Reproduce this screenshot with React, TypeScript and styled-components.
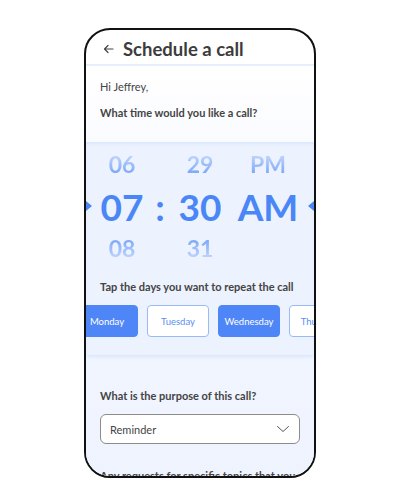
import React from 'react'
import styled, { createGlobalStyle } from 'styled-components'

const GlobalStyle = createGlobalStyle`
  html, body {
    margin: 0;
    padding: 0;
    background: #fff;
  }
  body {
    font-family: Lato, 'Noto Sans', sans-serif;
  }
`

const Stage = styled.div`
  width: 400px;
  height: 503px;
  padding-top: 28px;
  box-sizing: border-box;
  display: flex;
  justify-content: center;
`

const Phone = styled.div`
  width: 232px;
  height: 450px;
  box-sizing: border-box;
  border: 2px solid #111;
  border-radius: 26px;
  overflow: hidden;
  background: #fff;
  display: flex;
  flex-direction: column;
`

const Header = styled.div`
  height: 36px;
  flex-shrink: 0;
  display: flex;
  align-items: center;
  gap: 9px;
  padding: 3px 0 0 17px;
  box-sizing: border-box;
  border-bottom: 2px solid #e7eefc;
`

const Title = styled.h1`
  margin: 0;
  font-size: 18.5px;
  font-weight: 700;
  color: #3c3c3c;
`

const Greeting = styled.div`
  flex-shrink: 0;
  padding: 13px 14px 21px;
  background: linear-gradient(#fff, #fafbff);
`

const Text = styled.p<{ $bold?: boolean; $gap?: number }>`
  margin: ${p => p.$gap ?? 0}px 0 0;
  font-size: 11px;
  line-height: 16px;
  font-weight: ${p => (p.$bold ? 700 : 400)};
  color: #444;
  white-space: nowrap;
`

const Picker = styled.div`
  flex-shrink: 0;
  background: #ecf2fe;
  padding: 9px 0 18px;
  box-shadow: inset 0 3px 3px -1px #dbe6fd, 0 3px 3px -1px #dbe6fd;
  position: relative;
  z-index: 1;
`

const WheelRow = styled.div`
  display: flex;
  align-items: center;
`

const Marker = styled.span<{ $dir: 'left' | 'right' }>`
  width: 0;
  height: 0;
  border-top: 5px solid transparent;
  border-bottom: 5px solid transparent;
  ${p =>
    p.$dir === 'right'
      ? 'border-left: 6px solid #4a86f6;'
      : 'border-right: 6px solid #4a86f6; margin-left: auto;'}
`

const Wheel = styled.div`
  display: grid;
  grid-template-columns: 64px 12px 68px 68px;
  grid-template-rows: 26px 44px 26px;
  row-gap: 7px;
  margin-left: -2px;
  justify-items: center;
  align-items: center;
`

const Num = styled.span<{ $pos: 'top' | 'mid' | 'bottom' }>`
  font-weight: 700;
  line-height: 1;
  ${p =>
    p.$pos === 'mid'
      ? 'font-size: 37px; color: #4a86f6;'
      : `font-size: 23px; color: transparent;
         background: linear-gradient(${p.$pos === 'top' ? '180deg' : '0deg'}, rgba(74,134,246,0.22), rgba(74,134,246,0.75));
         -webkit-background-clip: text;
         background-clip: text;`}
`

const DaysTitle = styled(Text)`
  margin: 18px 14px 0;
`

const DayStrip = styled.div`
  overflow: hidden;
  margin-top: 10px;
`

const Days = styled.div`
  display: flex;
  gap: 9px;
  margin-left: -10px;
`

const Day = styled.div<{ $on?: boolean }>`
  flex: 0 0 62px;
  height: 32px;
  box-sizing: border-box;
  border-radius: 4px;
  border: 1px solid ${p => (p.$on ? '#4f86f7' : '#9ab9fa')};
  background: ${p => (p.$on ? '#4f86f7' : '#fff')};
  color: ${p => (p.$on ? '#fff' : '#5a8ef6')};
  font-size: 9.5px;
  display: flex;
  align-items: center;
  justify-content: center;
  white-space: nowrap;
  overflow: hidden;
`

const Purpose = styled.div`
  flex: 1;
  background: linear-gradient(#f1f5ff, #eef3fe);
  padding: 33px 14px 0;
`

const Select = styled.div`
  margin-top: 10px;
  height: 30px;
  box-sizing: border-box;
  border: 1px solid #8c8c8c;
  border-radius: 6px;
  background: #fff;
  display: flex;
  align-items: center;
  justify-content: space-between;
  padding: 0 8px 0 9px;
  font-size: 11px;
  color: #444;
`

const days = [
  { name: 'Monday', on: true },
  { name: 'Tuesday', on: false },
  { name: 'Wednesday', on: true },
  { name: 'Thursday', on: false },
]

const App = () => (
  <>
    <GlobalStyle />
    <Stage>
      <Phone>
        <Header>
          <svg width="11" height="10" viewBox="0 0 11 10" fill="none" stroke="#444" strokeWidth="1.2" strokeLinecap="round" strokeLinejoin="round">
            <path d="M10 5H1.5M5 1.5L1.5 5L5 8.5" />
          </svg>
          <Title>Schedule a call</Title>
        </Header>
        <Greeting>
          <Text>Hi Jeffrey,</Text>
          <Text $bold $gap={10}>What time would you like a call?</Text>
        </Greeting>
        <Picker>
          <WheelRow>
            <Marker $dir="right" />
            <Wheel>
              <Num $pos="top">06</Num>
              <span />
              <Num $pos="top">29</Num>
              <Num $pos="top">PM</Num>
              <Num $pos="mid">07</Num>
              <Num $pos="mid">:</Num>
              <Num $pos="mid">30</Num>
              <Num $pos="mid">AM</Num>
              <Num $pos="bottom">08</Num>
              <span />
              <Num $pos="bottom">31</Num>
              <span />
            </Wheel>
            <Marker $dir="left" />
          </WheelRow>
          <DaysTitle $bold>Tap the days you want to repeat the call</DaysTitle>
          <DayStrip>
            <Days>
              {days.map(d => (
                <Day key={d.name} $on={d.on}>
                  {d.name}
                </Day>
              ))}
            </Days>
          </DayStrip>
        </Picker>
        <Purpose>
          <Text $bold>What is the purpose of this call?</Text>
          <Select>
            Reminder
            <svg width="16" height="8" viewBox="0 0 16 8" fill="none" stroke="#555" strokeWidth="1" strokeLinecap="round" strokeLinejoin="round">
              <path d="M2.5 1.5l5.5 5 5.5-5" />
            </svg>
          </Select>
          <Text $bold $gap={24}>Any requests for specific topics that you want</Text>
        </Purpose>
      </Phone>
    </Stage>
  </>
)

export default App
